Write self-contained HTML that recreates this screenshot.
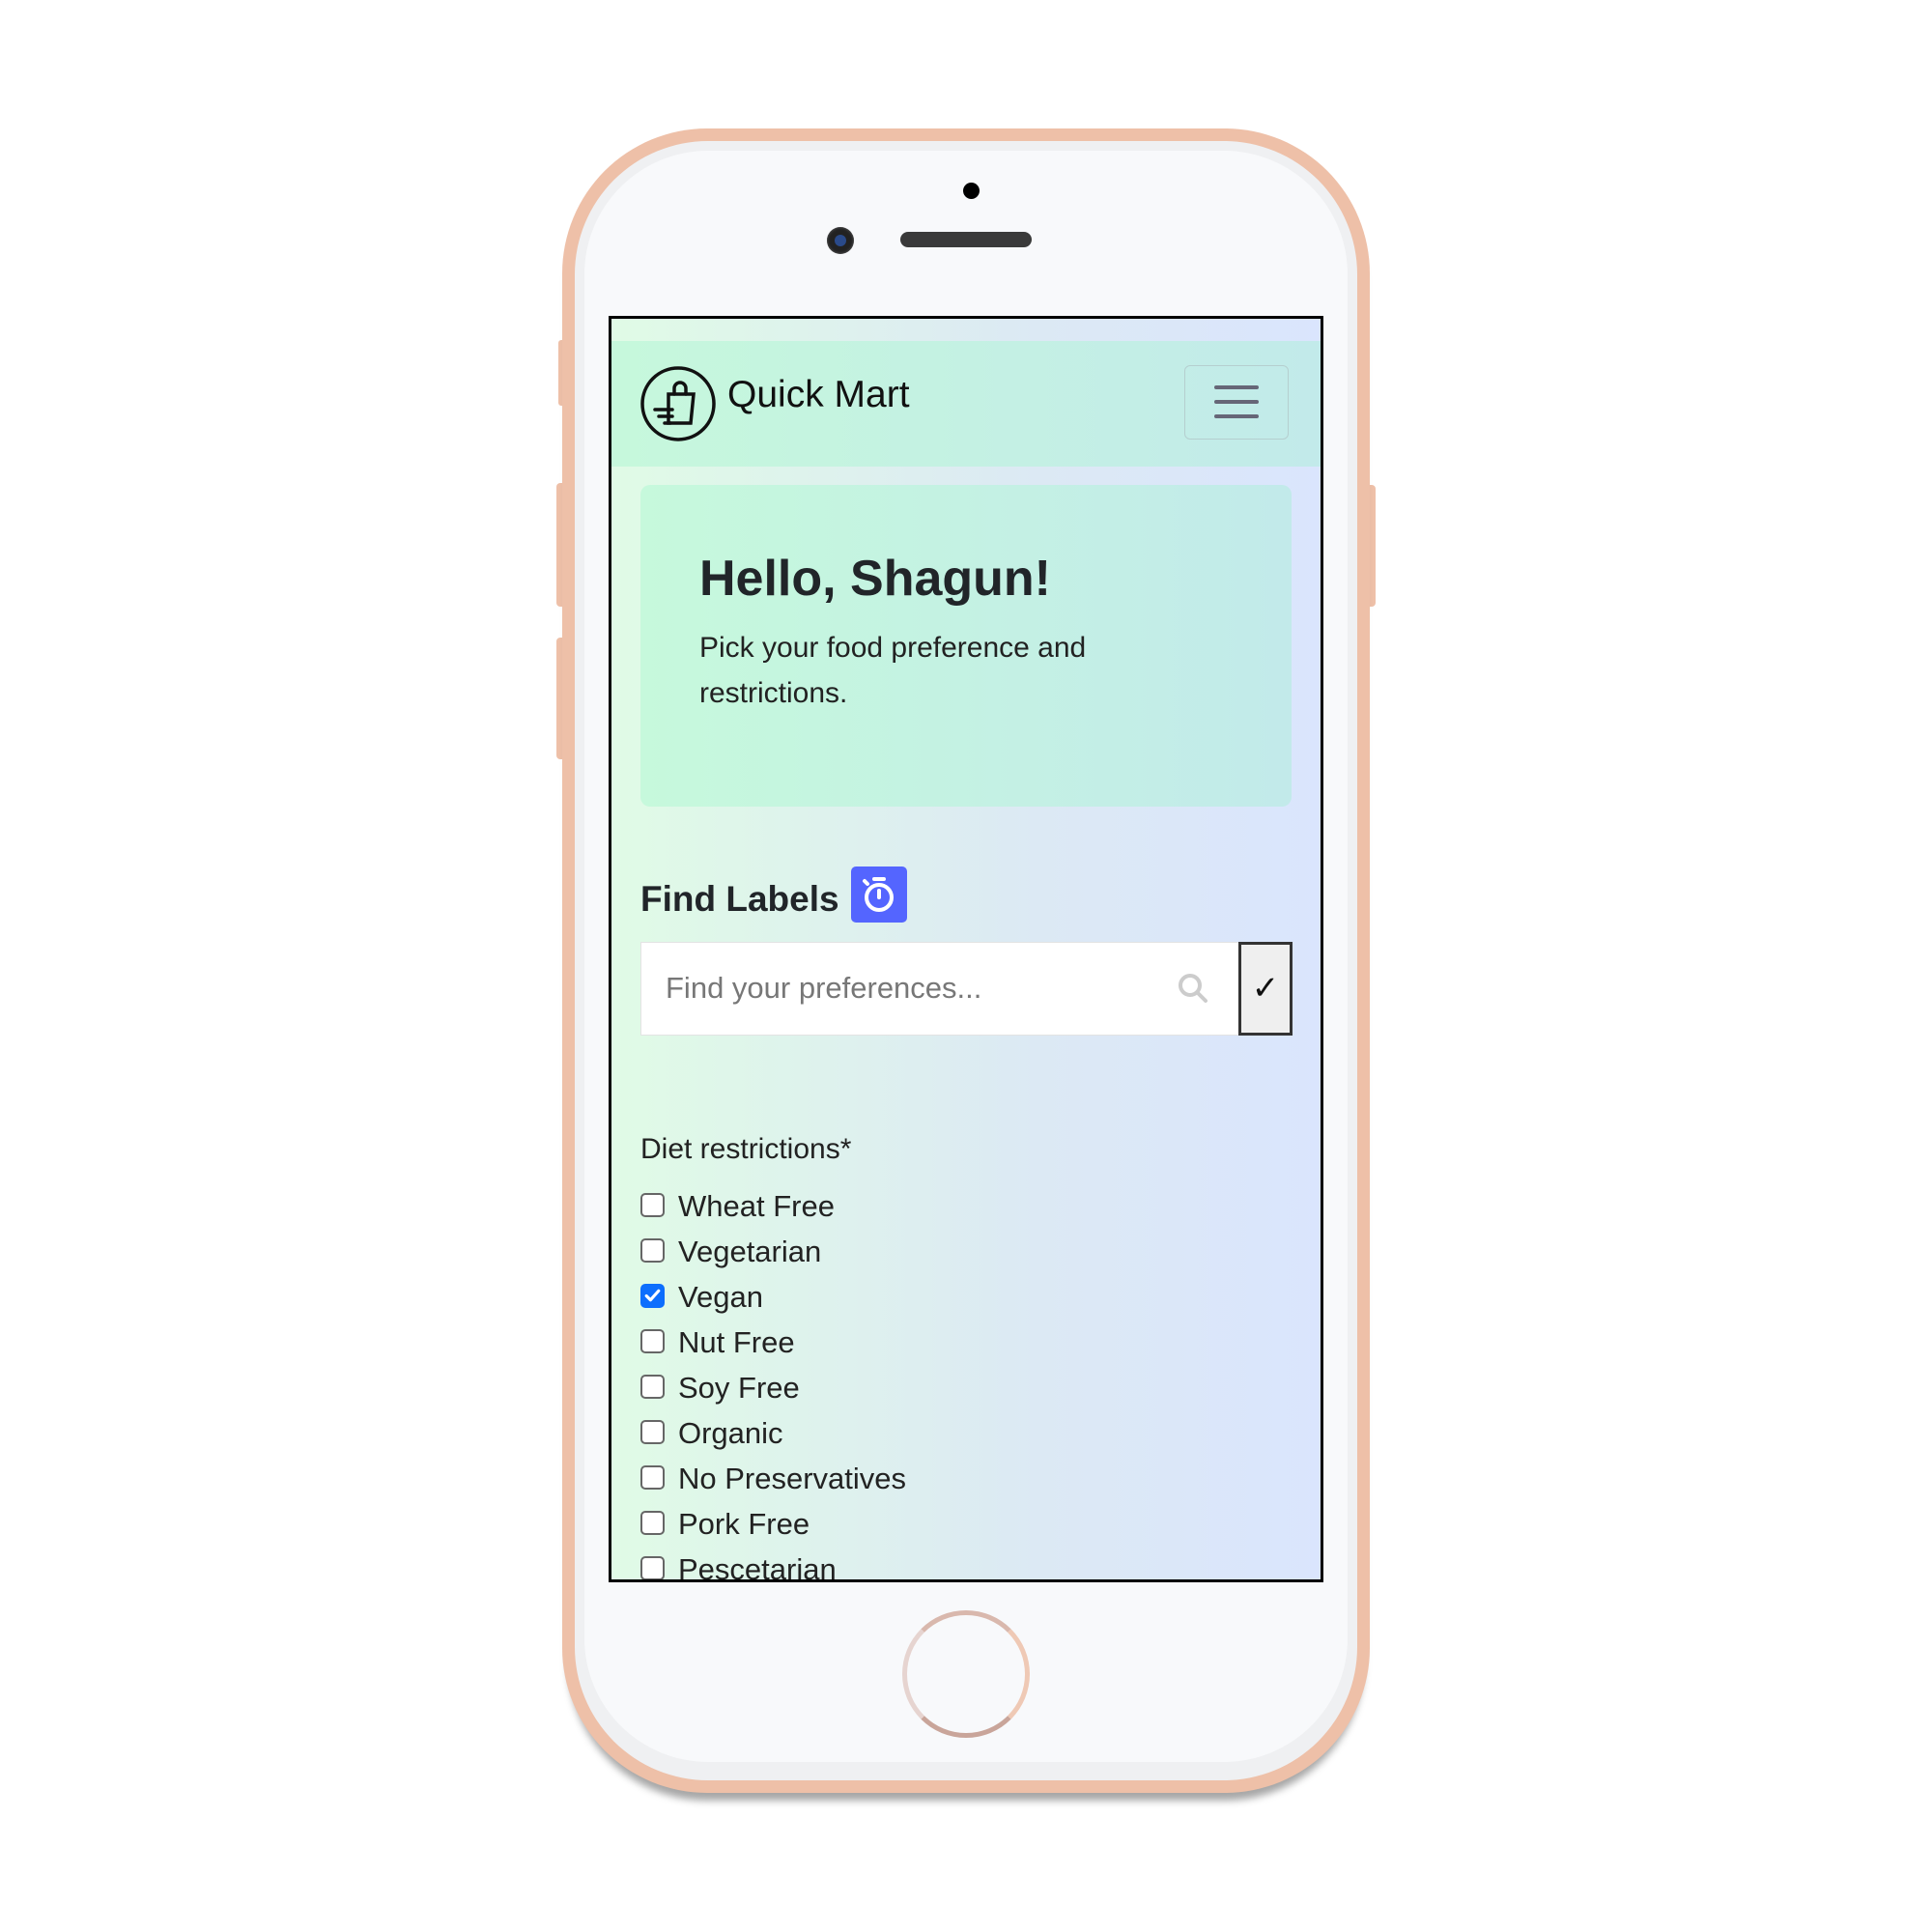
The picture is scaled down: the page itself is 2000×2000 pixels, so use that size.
<!DOCTYPE html>
<html><head><meta charset="utf-8"><style>
*{box-sizing:border-box;margin:0;padding:0}
body{width:2000px;height:2000px;background:#fff;position:relative;overflow:hidden;font-family:"Liberation Sans",sans-serif}
.abs{position:absolute}
.phone{left:582px;top:133px;width:836px;height:1723px;border-radius:150px;background:#eec0a8;box-shadow:0 14px 8px -6px rgba(0,0,0,.35)}
.inner{left:595px;top:146px;width:810px;height:1697px;border-radius:138px;background:#eff0f2}
.inner2{left:605px;top:156px;width:790px;height:1668px;border-radius:128px;background:#f8f9fb}
.screen{left:630px;top:327px;width:740px;height:1311px;border:3px solid #000;overflow:hidden;background:linear-gradient(90deg,#e0fbe6,#dce9f4 60%,#dae5fd)}
.nav{left:0;top:23px;width:740px;height:130px;background:linear-gradient(90deg,#c6f8dc,#c2eaea)}
.jumbo{left:30px;top:172px;width:674px;height:333px;border-radius:10px;background:linear-gradient(90deg,#c6f9dc,#c2eaea)}
.cb{width:25px;height:25px;border:2px solid #666;border-radius:5px;background:#fff}
.row{position:absolute;left:30px;font-size:31px;color:#222}
.row span{position:absolute;left:39px;top:-4px;white-space:nowrap}
</style></head><body>
<div class="abs" style="left:578px;top:352px;width:8px;height:68px;background:#eec0a8;border-radius:3px"></div>
<div class="abs" style="left:576px;top:500px;width:10px;height:128px;background:#eec0a8;border-radius:4px"></div>
<div class="abs" style="left:576px;top:660px;width:10px;height:126px;background:#eec0a8;border-radius:4px"></div>
<div class="abs" style="left:1414px;top:502px;width:10px;height:126px;background:#eec0a8;border-radius:4px"></div>
<div class="abs phone"></div>
<div class="abs inner"></div>
<div class="abs inner2"></div>
<div class="abs" style="left:997px;top:189px;width:17px;height:17px;border-radius:50%;background:#000"></div>
<div class="abs" style="left:856px;top:235px;width:28px;height:28px;border-radius:50%;background:#222;box-shadow:inset 0 0 3px #666"><div class="abs" style="left:8px;top:8px;width:12px;height:12px;border-radius:50%;background:#2a4a8a"></div></div>
<div class="abs" style="left:932px;top:240px;width:136px;height:16px;border-radius:8px;background:#3a3a3a"></div>
<div class="abs" style="left:934px;top:1667px;width:132px;height:132px;border-radius:50%;border:5px solid #c9a59a;border-top-color:#d9b8ad;border-right-color:#efc9b5;border-left-color:#e6d4d0"></div>
<div class="abs screen">
 <div class="abs nav">
  <svg class="abs" style="left:29px;top:25px" width="80" height="80" viewBox="0 0 80 80" fill="none" stroke="#111" stroke-width="3.5" stroke-linecap="round"><circle cx="40" cy="40" r="37"/><path d="M30 30h26l-3 30H30z"/><path d="M36 30v-6a6 6 0 0 1 12 0v6"/><path d="M16 46h18M20 53h14M26 60h6"/></svg>
  <div class="abs" style="left:120px;top:34px;font-size:39px;color:#111;white-space:nowrap">Quick Mart</div>
  <div class="abs" style="left:593px;top:25px;width:108px;height:77px;border:1.5px solid #b5cfcf;border-radius:6px">
   <div class="abs" style="left:30px;top:20px;width:46px;height:4px;background:#667;border-radius:2px"></div>
   <div class="abs" style="left:30px;top:35px;width:46px;height:4px;background:#667;border-radius:2px"></div>
   <div class="abs" style="left:30px;top:50px;width:46px;height:4px;background:#667;border-radius:2px"></div>
  </div>
 </div>
 <div class="abs jumbo">
  <div class="abs" style="left:61px;top:67px;font-size:52px;font-weight:bold;color:#212529;white-space:nowrap">Hello, Shagun!</div>
  <div class="abs" style="left:61px;top:145px;font-size:30px;line-height:47px;color:#222;width:520px">Pick your food preference and restrictions.</div>
 </div>
 <div class="abs" style="left:30px;top:580px;font-size:37px;font-weight:bold;color:#212529;white-space:nowrap">Find Labels</div>
 <div class="abs" style="left:248px;top:567px;width:58px;height:58px;background:#5465ff;border-radius:5px">
  <svg width="58" height="58" viewBox="0 0 58 58" fill="none" stroke="#fff" stroke-width="4" stroke-linecap="round"><circle cx="29" cy="32" r="13"/><path d="M24 13h10M29 32v-7M17 18l-3-3"/></svg>
 </div>
 <div class="abs" style="left:30px;top:645px;width:620px;height:97px;background:#fff;border:1.5px solid #e3e3e3"></div>
 <div class="abs" style="left:56px;top:675px;font-size:31px;color:#777;white-space:nowrap">Find your preferences...</div>
 <svg class="abs" style="left:584px;top:675px" width="36" height="36" viewBox="0 0 36 36" fill="none" stroke="#ccc" stroke-width="4" stroke-linecap="round"><circle cx="15" cy="15" r="10"/><path d="M23 23l8 8"/></svg>
 <div class="abs" style="left:649px;top:645px;width:56px;height:97px;background:#efefef;border:3px solid #333;font-size:34px;text-align:center;line-height:90px;color:#111">✓</div>
 <div class="abs" style="left:30px;top:843px;font-size:30px;color:#222;white-space:nowrap">Diet restrictions*</div>
 <div class="row" style="top:905px"><div class="cb"></div><span>Wheat Free</span></div>
 <div class="row" style="top:952px"><div class="cb"></div><span>Vegetarian</span></div>
 <div class="row" style="top:999px"><div class="cb" style="background:#0d6efd;border-color:#0d6efd;position:relative"><svg class="abs" style="left:0;top:0" width="21" height="21" viewBox="0 0 20 20" fill="none" stroke="#fff" stroke-width="3" stroke-linecap="round" stroke-linejoin="round"><path d="M4 10l4 4 8-9"/></svg></div><span>Vegan</span></div>
 <div class="row" style="top:1046px"><div class="cb"></div><span>Nut Free</span></div>
 <div class="row" style="top:1093px"><div class="cb"></div><span>Soy Free</span></div>
 <div class="row" style="top:1140px"><div class="cb"></div><span>Organic</span></div>
 <div class="row" style="top:1187px"><div class="cb"></div><span>No Preservatives</span></div>
 <div class="row" style="top:1234px"><div class="cb"></div><span>Pork Free</span></div>
 <div class="row" style="top:1281px"><div class="cb"></div><span>Pescetarian</span></div>
</div>
</body></html>
